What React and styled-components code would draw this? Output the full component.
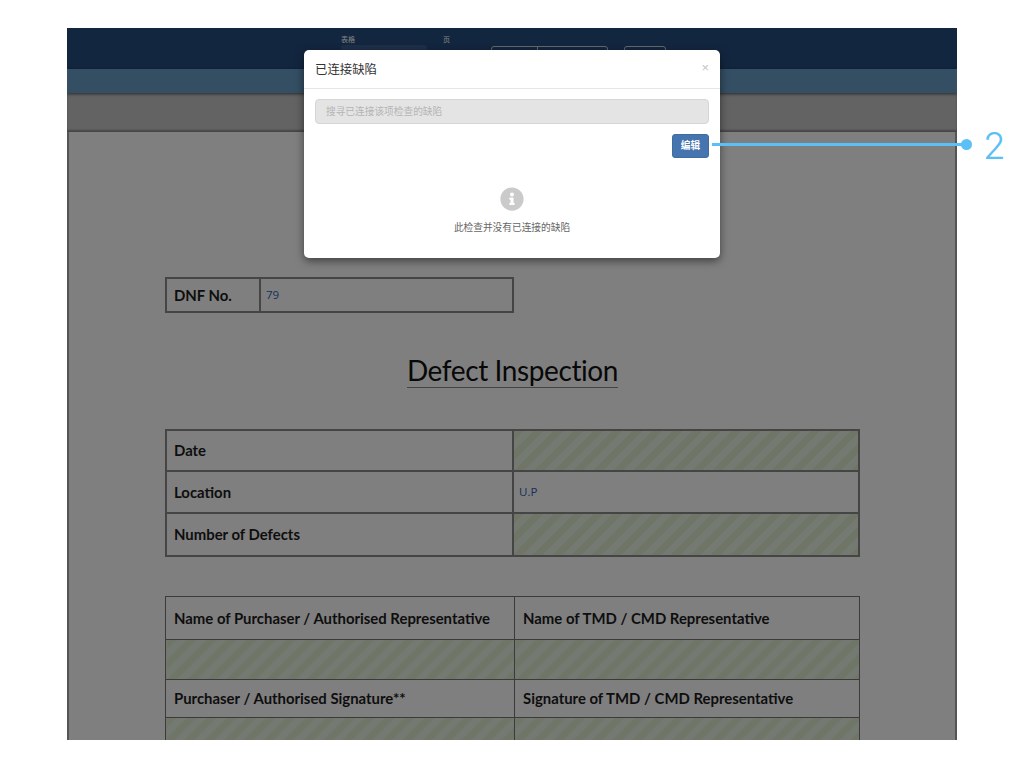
import React from 'react';
import styled, { createGlobalStyle } from 'styled-components';
import { FaInfoCircle } from 'react-icons/fa';

const GlobalStyle = createGlobalStyle`
  html, body {
    margin: 0;
    padding: 0;
    background: #fff;
  }
  body {
    font-family: "Liberation Sans", "Noto Sans CJK SC", sans-serif;
  }
`;

const cjk = `"Liberation Sans", "Noto Sans CJK SC", sans-serif`;
const stripes = `repeating-linear-gradient(135deg, #dfedd0 0 7px, #e9f2e2 7px 14px)`;

const Page = styled.div`
  position: relative;
  width: 1024px;
  height: 768px;
  padding: 28px 67px;
  box-sizing: border-box;
  overflow: hidden;
`;

const Frame = styled.div`
  position: relative;
  height: 712px;
  overflow: hidden;
  background: #fff;
`;

const TopBar = styled.div`
  height: 41px;
  background: #264c7e;
  display: flex;
  padding-left: 274px;
  box-sizing: border-box;
`;

const Field = styled.div`
  width: ${props => props.$width}px;
  padding-top: 8px;
  font-size: 7px;
  line-height: 8px;
  color: #fff;
`;

const FieldBox = styled.div`
  width: 86px;
  height: 14px;
  margin-top: 1px;
  background: #3a5f90;
  border-radius: 3px;
`;

const ButtonGroup = styled.div`
  display: flex;
  margin: 18px 16px 0 0;
  height: 20px;
  border: 1px solid #c6d0de;
  border-radius: 3px;
  color: #fff;
  font-size: 8px;
`;

const GroupCell = styled.div`
  width: ${props => props.$width}px;
  padding-top: 2px;
  text-align: center;
  & + & {
    border-left: 1px solid #c6d0de;
  }
`;

const SubBar = styled.div`
  height: 24px;
  background: #689cc6;
  box-shadow: 0 1px 3px rgba(0, 0, 0, 0.6);
  position: relative;
`;

const ToolStrip = styled.div`
  height: 39px;
  background: #c6c6c6;
  box-shadow: inset 0 -2px 2px rgba(0, 0, 0, 0.3);
`;

const Paper = styled.div`
  height: 608px;
  padding: 145px 96px 0;
  box-sizing: border-box;
  background: #fff;
  border-left: 2px solid #aaa;
  border-right: 2px solid #aaa;
  font-family: Lato, "Open Sans", sans-serif;
  color: #1c1c1c;
`;

const Table = styled.table`
  border-collapse: collapse;
  table-layout: fixed;
  width: ${props => props.$width}px;
  margin-bottom: ${props => props.$gap || 0}px;
  td {
    border: ${props => props.$line}px solid ${props => (props.$line > 1 ? '#8a8a8a' : '#777')};
    padding: 0 ${props => (props.$line > 1 ? 7 : 8)}px 1px;
    box-sizing: border-box;
    font-size: 14.9px;
    font-weight: 700;
  }
`;

const Row = styled.tr`
  height: ${props => props.$height}px;
  td {
    height: ${props => props.$height}px;
  }
`;

const Value = styled.td`
  && {
    font-family: "Open Sans", Lato, sans-serif;
    font-size: 11.5px;
    font-weight: 400;
    color: #3060b8;
    padding: 0 5px 2px;
  }
`;

const Striped = styled.td`
  background: ${stripes};
`;

const TitleWrap = styled.div`
  width: 695px;
  text-align: center;
  margin: 40px 0 41px;
`;

const Title = styled.span`
  display: inline-block;
  padding-top: 1px;
  font-family: Lato, "Open Sans", sans-serif;
  font-weight: 400;
  font-size: 28px;
  line-height: 33px;
  letter-spacing: -0.4px;
  color: #111;
  border-bottom: 1px solid #888;
`;

const Overlay = styled.div`
  position: absolute;
  inset: 0;
  background: rgba(0, 0, 0, 0.5);
  display: flex;
  justify-content: center;
  align-items: flex-start;
  padding-top: 22px;
  box-sizing: border-box;
`;

const Modal = styled.div`
  width: 416px;
  height: 208px;
  background: #fff;
  border-radius: 5px;
  box-shadow: 0 3px 9px rgba(0, 0, 0, 0.5);
  font-family: ${cjk};
`;

const ModalHeader = styled.div`
  height: 39px;
  box-sizing: border-box;
  border-bottom: 1px solid #e5e5e5;
  padding: 0 11px;
  display: flex;
  justify-content: space-between;
  align-items: center;
`;

const ModalTitle = styled.div`
  font-size: 12.4px;
  color: #333;
`;

const Close = styled.span`
  font-size: 13px;
  color: #c4c4c4;
  margin: -4px 0 0 0;
`;

const ModalBody = styled.div`
  padding: 10px 11px 0;
`;

const SearchInput = styled.div`
  height: 25px;
  box-sizing: border-box;
  background: #e4e4e4;
  border: 1px solid #d6d6d6;
  border-radius: 4px;
  padding-left: 10px;
  font-size: 9.7px;
  line-height: 23px;
  color: #b4b4b4;
`;

const Actions = styled.div`
  display: flex;
  justify-content: flex-end;
  margin-top: 10px;
`;

const EditButton = styled.div`
  width: 37px;
  height: 24px;
  box-sizing: border-box;
  background: #4574ae;
  border: 1px solid #3f6ba3;
  border-radius: 3px;
  color: #fff;
  font-size: 9.7px;
  font-weight: 700;
  line-height: 22px;
  text-align: center;
`;

const EmptyState = styled.div`
  margin-top: 29px;
  display: flex;
  flex-direction: column;
  align-items: center;
  gap: 11px;
  color: #cacaca;
`;

const EmptyText = styled.div`
  font-size: 9.7px;
  line-height: 12px;
  color: #666;
`;

const Callout = styled.div`
  position: absolute;
  left: 712px;
  top: 126px;
  display: flex;
  align-items: center;
  color: #5ac0f5;
`;

const CalloutLine = styled.div`
  width: 250px;
  height: 3px;
  background: #5ac0f5;
`;

const CalloutDot = styled.div`
  width: 11px;
  height: 11px;
  margin-left: -1px;
  border-radius: 50%;
  background: #5ac0f5;
`;

const CalloutNumber = styled.div`
  margin-left: 11px;
  font-family: Inter, "Liberation Sans", sans-serif;
  font-weight: 300;
  font-size: 37px;
  line-height: 32px;
  padding-top: 4px;
`;

export default function App() {
  return (
    <Page>
      <GlobalStyle />
      <Frame>
        <TopBar>
          <Field $width={102}>
            表格
            <FieldBox />
          </Field>
          <Field $width={48}>页</Field>
          <ButtonGroup>
            <GroupCell $width={45}>保存</GroupCell>
            <GroupCell $width={69}>全部连接缺陷</GroupCell>
          </ButtonGroup>
          <ButtonGroup>
            <GroupCell $width={40}>选项</GroupCell>
          </ButtonGroup>
        </TopBar>
        <SubBar />
        <ToolStrip />
        <Paper>
          <Table $width={349} $line={2}>
            <colgroup>
              <col width="94" />
              <col />
            </colgroup>
            <tbody>
              <Row $height={34}>
                <td>DNF No.</td>
                <Value>79</Value>
              </Row>
            </tbody>
          </Table>
          <TitleWrap>
            <Title>Defect Inspection</Title>
          </TitleWrap>
          <Table $width={695} $gap={39} $line={2}>
            <colgroup>
              <col width="347" />
              <col />
            </colgroup>
            <tbody>
              <Row $height={41}>
                <td>Date</td>
                <Striped />
              </Row>
              <Row $height={42}>
                <td>Location</td>
                <Value>U.P</Value>
              </Row>
              <Row $height={43}>
                <td>Number of Defects</td>
                <Striped />
              </Row>
            </tbody>
          </Table>
          <Table $width={695} $line={1}>
            <colgroup>
              <col width="349" />
              <col />
            </colgroup>
            <tbody>
              <Row $height={43}>
                <td>Name of Purchaser / Authorised Representative</td>
                <td>Name of TMD / CMD Representative</td>
              </Row>
              <Row $height={40}>
                <Striped />
                <Striped />
              </Row>
              <Row $height={38}>
                <td>Purchaser / Authorised Signature**</td>
                <td>Signature of TMD / CMD Representative</td>
              </Row>
              <Row $height={40}>
                <Striped />
                <Striped />
              </Row>
            </tbody>
          </Table>
        </Paper>
        <Overlay>
          <Modal>
            <ModalHeader>
              <ModalTitle>已连接缺陷</ModalTitle>
              <Close>×</Close>
            </ModalHeader>
            <ModalBody>
              <SearchInput>搜寻已连接该项检查的缺陷</SearchInput>
              <Actions>
                <EditButton>编辑</EditButton>
              </Actions>
              <EmptyState>
                <FaInfoCircle size={24} />
                <EmptyText>此检查并没有已连接的缺陷</EmptyText>
              </EmptyState>
            </ModalBody>
          </Modal>
        </Overlay>
      </Frame>
      <Callout>
        <CalloutLine />
        <CalloutDot />
        <CalloutNumber>2</CalloutNumber>
      </Callout>
    </Page>
  );
}
